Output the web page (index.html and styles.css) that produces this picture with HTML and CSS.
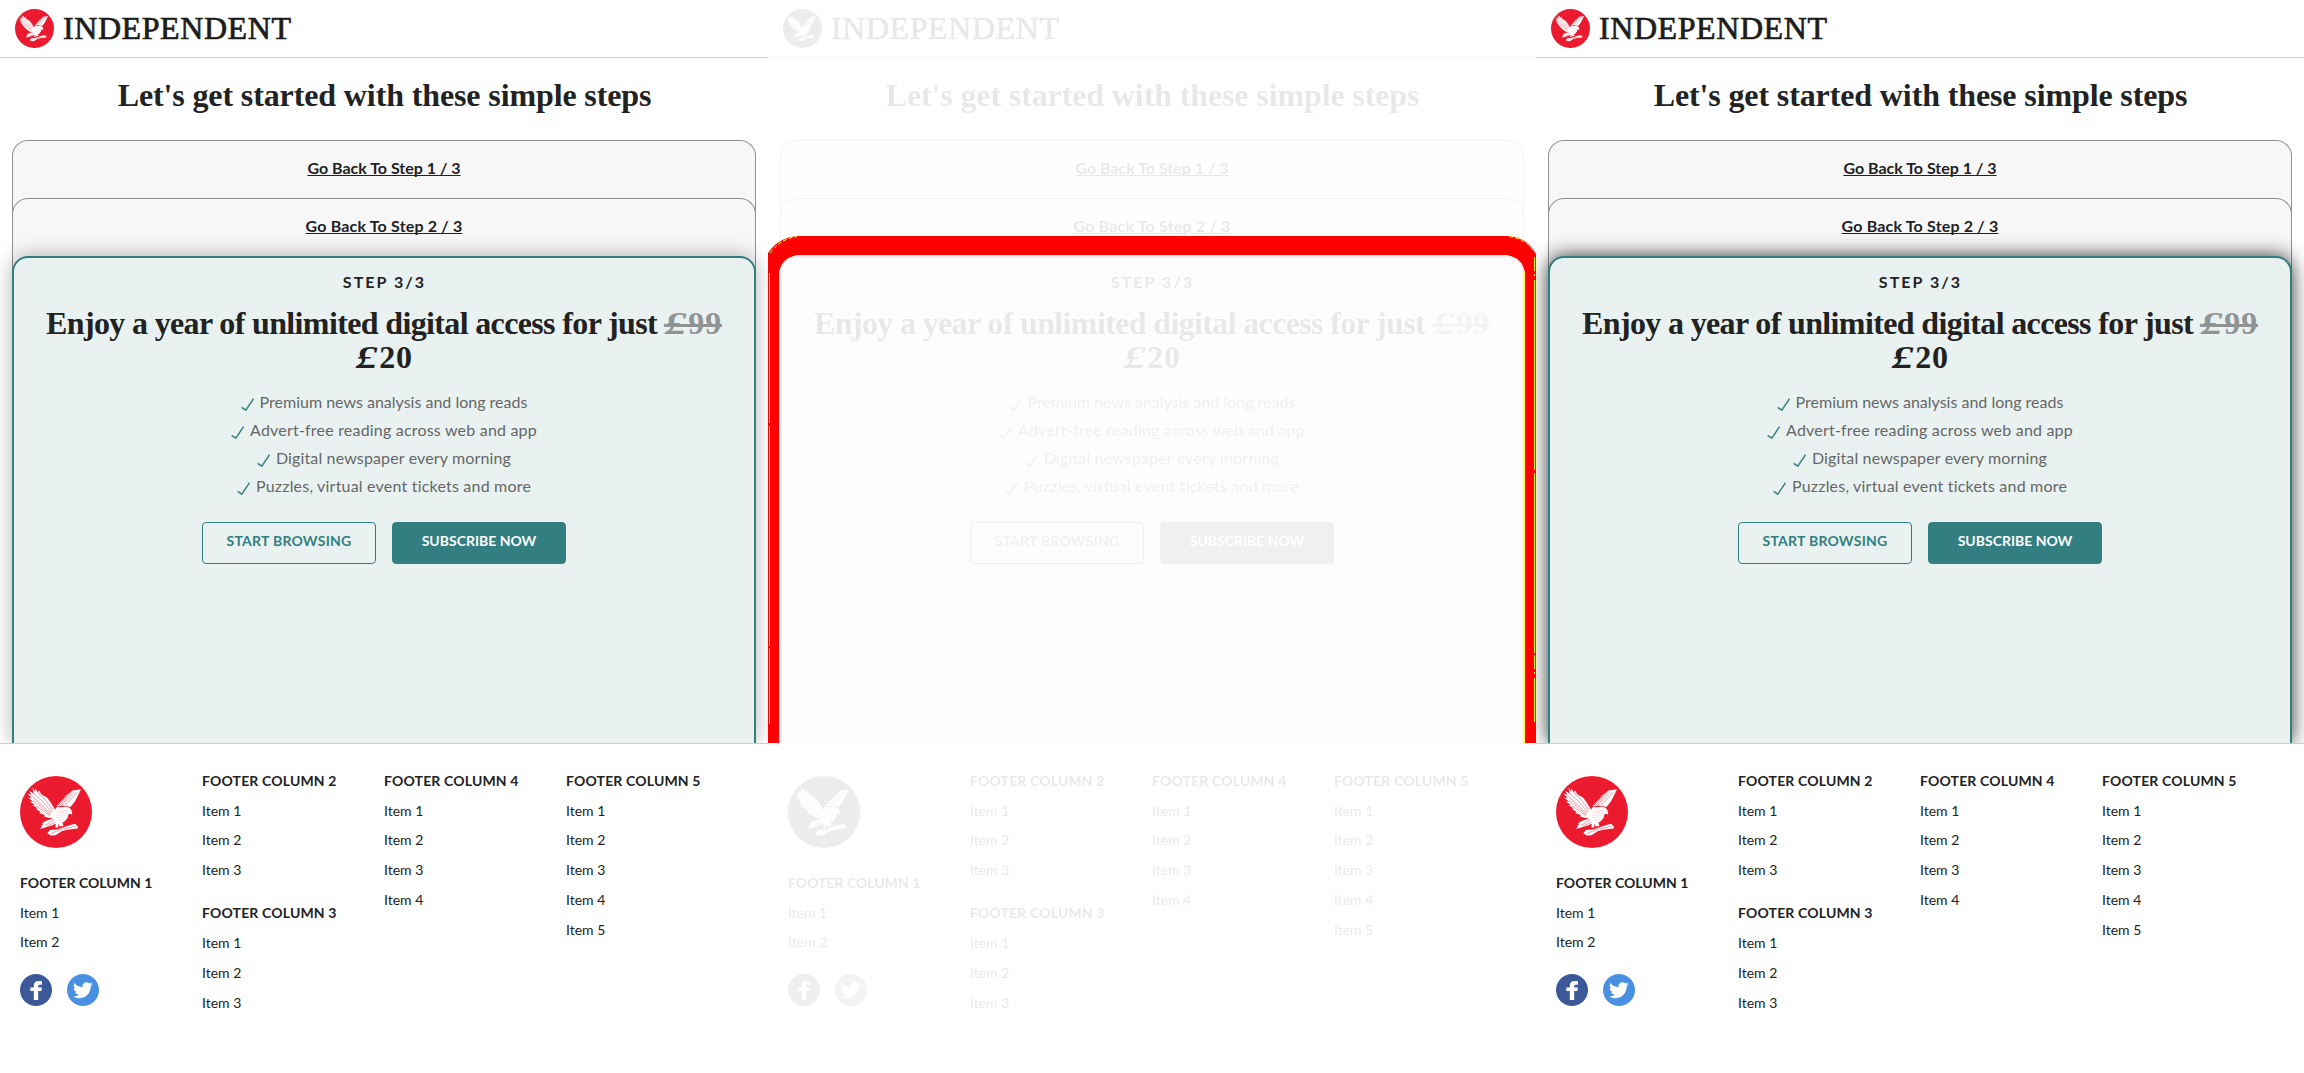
FILE: index.html
```html
<!DOCTYPE html>
<html lang="en">
<head>
<meta charset="utf-8">
<title>Independent</title>
<link rel="stylesheet" href="styles.css">
</head>
<body>
<svg width="0" height="0" class="defs" aria-hidden="true">
  <symbol id="eagle" viewBox="0 0 72 72">
    <circle cx="36" cy="36" r="36" fill="#ec1a2e"/>
    <g fill="#fff">
      <path d="M12.5 11.3 15 15.8 15.3 12.6 18.3 17.2 18.7 14 21.5 18.5 27 21.5 31 27 35 33.5 37.2 31 41 31.2 45 30.6 49 31.5 51.5 34 52.3 39 50.6 37.8 48.5 38.2 47.5 42 44.5 45.5 42.5 46.6 43.5 50 39.5 50.5 38.5 47.5 38 51.5 35.5 51.5 35.7 47.5 32 49.5 25 51.5 20 53 22 50.5 21 50 23.5 48 21.8 47.4 25 45.3 30 43.5 33 42.3 28 41.8 23.5 40 25.5 39.2 19 37 21 36 15.5 33 18 32.6 12 29 15 29 9.8 25.4 13.2 25.8 8 21.3 12 22.2 7.4 17.6 11.5 19 9.3 15 13.5 17.5Z"/>
      <path d="M61 13.3 52.5 14.5 49 17.5 46 19.5 43.5 22.5 41 25 38 28.5 36.5 30.8 43 29.5 50.5 31 54.5 26 57.5 20.5Z"/>
      <path d="M27.3 57.5 30 54 37 53.5 43 51.5 49 49.5 55 47.8 58 50.5 57.5 52.4 49 53.5 42 55 35.5 59.3 31 59.5Z"/>
    </g>
    <g fill="none" stroke="#ec1a2e" stroke-width=".45">
      <path d="M13 17 20 23 32 36M11.5 20 20 27.5 31 37.5M13 24.5 21 30.5 30 38.5M16 29.5 29.5 39.5M18 17 25 23.5 33 34"/>
      <path d="M52 16 39 30M49 17.5 38 29M46 20 37.5 29M55 15.5 41.5 29.5M58 15.5 45 29.5"/>
      <path d="M34 44 25 49.5M35 46 27 50.5M31 57.5 41 53.5 56 50.5"/>
      <path stroke-dasharray=".6 1.5" d="M38 34 48 35M37 36.5 48 37M36.5 39 47 39.5M37.5 41.5 46 42M39 44 44 44"/>
    </g>
  </symbol>
  <symbol id="tick" viewBox="0 0 13 13">
    <path d="M.6 9.4 4.8 12.2 12.5.7" fill="none" stroke="#327e80" stroke-width="1.4"/>
  </symbol>
  <symbol id="facebook" viewBox="0 0 32 32">
    <circle cx="16" cy="16" r="16" fill="#3b5998"/>
    <path fill="#fff" d="M13.8 26V17H10.3V13.4H13.8V11.6C13.8 8.6 15.6 7 18.5 7H22V10.7H19.8C18.6 10.7 18.2 11.3 18.2 12.3V13.4H22L21.4 17H18.2V26Z"/>
  </symbol>
  <symbol id="twitter" viewBox="0 0 32 32">
    <circle cx="16" cy="16" r="16" fill="#4a90e2"/>
    <path fill="#fff" transform="translate(6 6.4) scale(.82)" d="M23.953 4.57a10 10 0 01-2.825.775 4.958 4.958 0 002.163-2.723c-.951.555-2.005.959-3.127 1.184a4.92 4.92 0 00-8.384 4.482C7.69 8.095 4.067 6.13 1.64 3.162a4.822 4.822 0 00-.666 2.475c0 1.71.87 3.213 2.188 4.096a4.904 4.904 0 01-2.228-.616v.06a4.923 4.923 0 003.946 4.827 4.996 4.996 0 01-2.212.085 4.936 4.936 0 004.604 3.417 9.867 9.867 0 01-6.102 2.105c-.39 0-.779-.023-1.17-.067a13.995 13.995 0 007.557 2.209c9.053 0 13.998-7.496 13.998-13.985 0-.21 0-.42-.015-.63A9.935 9.935 0 0024 4.59z"/>
  </symbol>
</svg>

<main class="board">
  <section class="panel"></section>
  <section class="panel panel-diff">
    <svg class="outline" viewBox="0 0 768 743" width="768" height="743">
      <path fill="#f00" d="M0 743V253Q10 238 29 236H741Q760 238 768 254V743H756.5V271Q754 258 740 255.500H28Q14 258 11.500 271V743Z"/>
      <g fill="none" stroke="#ff0" shape-rendering="crispEdges">
        <path d="M28 255.500H740M11.500 271V743M756.500 271V743"/>
        <path d="M1.500 273V724" stroke-dasharray="150 3 220 2"/>
        <path d="M766.500 257V722" stroke-dasharray="14 3 2 4 190 3 180 2"/>
      </g>
      <path fill="none" stroke="#ff0" stroke-dasharray="4 2" d="M2 253Q12 239 29 236.500M741 236.500Q758 239 766 252"/>
    </svg>
  </section>
  <section class="panel panel-strong"></section>
</main>

<template id="page">
  <div class="page">
    <header class="header">
      <svg class="header-logo"><use href="#eagle"/></svg>
      <span class="wordmark">INDEPENDENT</span>
    </header>
    <div class="content">
      <h1 class="title">Let's get started with these simple steps</h1>
      <div class="step"><a class="back">Go Back To Step 1 / 3</a></div>
      <div class="step"><a class="back back-second">Go Back To Step 2 / 3</a></div>
      <div class="step step-current">
        <div class="step-label">STEP 3/3</div>
        <h2 class="offer">Enjoy a year of unlimited digital access for just <s class="old-price"><span class="pound">£</span>99</s><br><span class="price"><span class="pound">£</span>20</span></h2>
        <ul class="benefits">
          <li><svg class="tick"><use href="#tick"/></svg><span>Premium news analysis and long reads</span></li>
          <li><svg class="tick"><use href="#tick"/></svg><span class="wide">Advert-free reading across web and app</span></li>
          <li><svg class="tick"><use href="#tick"/></svg><span class="semi-wide">Digital newspaper every morning</span></li>
          <li><svg class="tick"><use href="#tick"/></svg><span class="wide">Puzzles, virtual event tickets and more</span></li>
        </ul>
        <div class="actions">
          <a class="button button-outline">START BROWSING</a>
          <a class="button">SUBSCRIBE NOW</a>
        </div>
      </div>
    </div>
    <footer class="footer">
      <div class="column">
        <svg class="footer-logo"><use href="#eagle"/></svg>
        <h3 class="narrow">FOOTER COLUMN 1</h3>
        <p>Item 1</p><p>Item 2</p>
        <div class="social">
          <svg><use href="#facebook"/></svg>
          <svg><use href="#twitter"/></svg>
        </div>
      </div>
      <div class="column">
        <h3>FOOTER COLUMN 2</h3>
        <p>Item 1</p><p>Item 2</p><p>Item 3</p>
        <h3 class="next">FOOTER COLUMN 3</h3>
        <p>Item 1</p><p>Item 2</p><p>Item 3</p>
      </div>
      <div class="column">
        <h3>FOOTER COLUMN 4</h3>
        <p>Item 1</p><p>Item 2</p><p>Item 3</p><p>Item 4</p>
      </div>
      <div class="column">
        <h3>FOOTER COLUMN 5</h3>
        <p>Item 1</p><p>Item 2</p><p>Item 3</p><p>Item 4</p><p>Item 5</p>
      </div>
    </footer>
  </div>
</template>
<script src="panels.js"></script>
</body>
</html>
```
FILE: styles.css
```css
* { box-sizing: border-box; }
body { margin: 0; background: #fff; color: #222; font-family: Lato, "Liberation Sans", sans-serif; font-variant-ligatures: none; }
h1, h2, h3, p, ul { margin: 0; padding: 0; }
.defs { position: absolute; }

.board { display: grid; grid-template-columns: repeat(3, 768px); }
.panel { position: relative; height: 1073px; overflow: hidden; }
.panel-diff .page { filter: grayscale(1) opacity(.1); }
.outline { position: absolute; top: 0; left: 0; z-index: 1; }

.header { display: flex; align-items: center; gap: 9px; height: 58px; padding-left: 15px; border-bottom: 1px solid #ccc; }
.header-logo { width: 39px; height: 39px; }
.wordmark { font: 400 32px/57px "Liberation Serif", serif; letter-spacing: .58px; -webkit-text-stroke: .7px #1d1d1b; color: #1d1d1b; }

.content { height: 685px; padding: 20px 12px 0; overflow: hidden; text-align: center; }
.title, .offer { font: 700 32px/34px "Liberation Serif", serif; white-space: nowrap; }
.title { margin-bottom: 28px; padding-left: 1px; letter-spacing: -.12px; }

.step { position: relative; height: 78px; margin-bottom: -20px; border: 1px solid #8f8f8f; border-bottom: 0; border-radius: 16px 16px 0 0; background: #f7f7f7; }
.back { font-size: 16px; font-weight: 700; line-height: 54px; text-decoration: underline; text-decoration-thickness: 1px; text-underline-offset: 1px; text-decoration-skip-ink: none; }
.back-second { letter-spacing: .18px; }
.step-current { height: 487px; margin-bottom: 0; padding-top: 14px; border: 2px solid #327e80; border-bottom: 0; background: #e9f2f1; box-shadow: 0 0 20px rgba(0, 0, 0, .3); }
.panel-diff .step-current { box-shadow: none; }
.panel-strong .step-current { box-shadow: 0 0 20px rgba(0, 0, 0, .8); }
.step-label { padding-left: 1px; font-size: 16px; font-weight: 700; line-height: 20px; letter-spacing: 2.05px; }
.offer { margin: 14px 0; letter-spacing: -.64px; }
.pound { display: inline-block; width: 24px; font-style: italic; transform: scaleX(1.35); }
.old-price, .price { letter-spacing: .8px; }
.old-price { position: relative; color: #8f9393; text-decoration: none; }
.old-price::after { content: ""; position: absolute; left: 0; right: 0; top: 19px; height: 3px; background: #8f9393; }

.benefits { list-style: none; color: #666; font-size: 16px; line-height: 28px; }
.benefits li { display: flex; justify-content: center; align-items: center; gap: 6px; height: 28px; }
.wide { letter-spacing: .2px; }
.semi-wide { letter-spacing: .14px; }
.tick { width: 13px; height: 13px; margin-top: 5px; }

.actions { display: flex; justify-content: center; gap: 16px; margin-top: 22px; }
.button { width: 174px; height: 42px; border: 1px solid #327e80; border-radius: 4px; background: #327e80; color: #fff; font-size: 14px; font-weight: 700; line-height: 35px; }
.button-outline { background: none; color: #327e80; letter-spacing: .25px; }

.footer { display: grid; grid-template-columns: repeat(4, 182px); height: 330px; padding: 21.65px 20px 0; border-top: 1px solid #ccc; background: #fff; font-size: 14px; line-height: 29.87px; }
.column h3 { font-size: 14px; font-weight: 700; letter-spacing: .16px; }
.column .narrow { letter-spacing: 0; }
.column .next { margin-top: 12.8px; }
.footer-logo { display: block; width: 72px; height: 72px; margin: 10.35px 0 19.65px; }
.social { display: flex; gap: 15px; margin-top: 16.7px; }
.social svg { width: 32px; height: 32px; }
```
FILE: panels.js
```js
const page = document.getElementById('page');
document.querySelectorAll('.panel').forEach(panel => {
  panel.prepend(page.content.cloneNode(true));
});
```
